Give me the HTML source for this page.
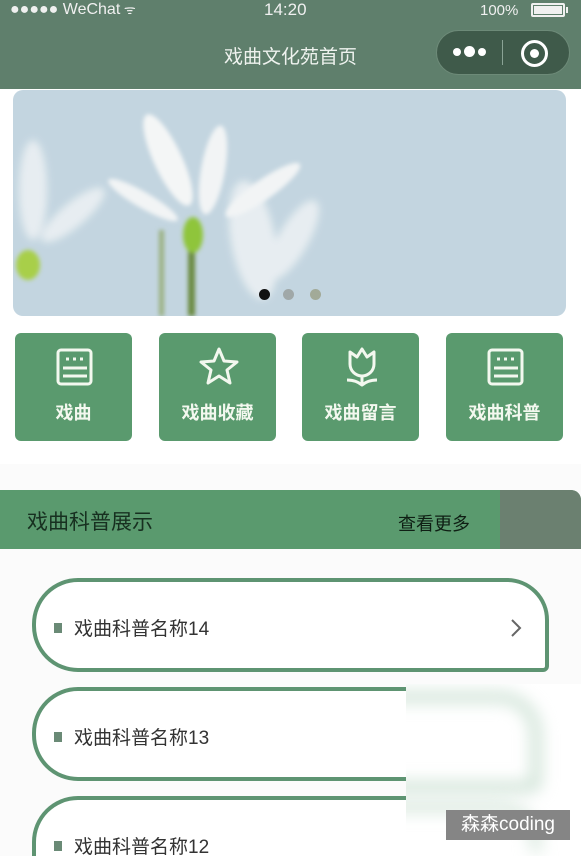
<!DOCTYPE html>
<html style="width:581px;height:856px;overflow:hidden"><head><meta charset="utf-8"><style>
*{margin:0;padding:0;box-sizing:border-box}
body{width:581px;height:856px;overflow:hidden;background:#fbfbfb;font-family:"Liberation Sans","Noto Sans CJK SC",sans-serif;position:relative}
.hdr{position:absolute;left:0;top:0;width:581px;height:89px;background:#5f7f6c;color:#f0f0f0}
.abs{position:absolute}
.tile{position:absolute;top:333px;width:117px;height:108px;background:#5a9a6e;border-radius:6px;color:#f3f8ef;font-size:18px;text-align:center;font-weight:bold}
.tile svg{position:absolute;left:40px;top:14px}
.tile span{position:absolute;left:0;right:0;top:66px}
.item{position:absolute;left:32px;width:517px;height:94px;border:4px solid #5e9472;border-radius:46px 42px 6px 46px;background:#fff;overflow:hidden}
.item .t{position:absolute;left:38px;top:37px;font-size:19px;line-height:22px;color:#333}
.item .sq{position:absolute;left:18px;top:41px;width:8px;height:10px;background:#6a8a76}
</style></head><body>
<div class="hdr">
 <div class="abs" style="left:10px;top:0;font-size:16px;line-height:20px">●●●●● WeChat<span style="font-size:13px"> ᯤ</span></div>
 <div class="abs" style="left:264px;top:0;font-size:17px;line-height:19px">14:20</div>
 <div class="abs" style="left:480px;top:1px;font-size:15px;line-height:19px">100%</div>
 <div class="abs" style="left:531px;top:3px;width:34px;height:14px;border:2px solid #f0f0f0;border-radius:2px;padding:1px"><div style="width:100%;height:100%;background:#f0f0f0"></div></div>
 <div class="abs" style="left:566px;top:7px;width:2px;height:6px;background:#f0f0f0"></div>
 <div class="abs" style="left:0;right:0;top:42px;text-align:center;font-size:19px;color:#eef2ee">戏曲文化苑首页</div>
 <div class="abs" style="left:436px;top:30px;width:134px;height:45px;border-radius:23px;background:#3f5a4a;border:1px solid #6d8a78"></div>
 <div class="abs" style="left:453px;top:46px;font-size:0">
  <span style="display:inline-block;width:8px;height:8px;border-radius:50%;background:#fff;margin-right:3px"></span><span style="display:inline-block;width:11px;height:11px;border-radius:50%;background:#fff;margin-right:3px;vertical-align:-1px"></span><span style="display:inline-block;width:8px;height:8px;border-radius:50%;background:#fff"></span></div>
 <div class="abs" style="left:502px;top:40px;width:1px;height:25px;background:#8aa395"></div>
 <div class="abs" style="left:521px;top:40px;width:27px;height:27px;border-radius:50%;border:3px solid #fff"></div>
 <div class="abs" style="left:530px;top:49px;width:9px;height:9px;border-radius:50%;background:#fff"></div>
</div>
<div class="abs" style="left:0;top:89px;width:581px;height:375px;background:#fff"></div>
<div class="abs" style="left:13px;top:90px;width:553px;height:226px;border-radius:10px;overflow:hidden;background:#c3d5e0">
<svg width="553" height="226" viewBox="0 0 553 226">
<defs><filter id="b"><feGaussianBlur stdDeviation="4"/></filter><filter id="b2"><feGaussianBlur stdDeviation="2"/></filter></defs>
<g filter="url(#b)" opacity=".85">
<ellipse cx="240" cy="150" rx="22" ry="60" fill="#eef2f4" transform="rotate(-10 240 150)"/>
<ellipse cx="280" cy="150" rx="15" ry="45" fill="#eef2f4" transform="rotate(30 280 150)"/>
<ellipse cx="20" cy="100" rx="14" ry="50" fill="#eef2f4"/>
<ellipse cx="60" cy="125" rx="12" ry="40" fill="#eef2f4" transform="rotate(50 60 125)"/>
</g>
<g filter="url(#b2)">
<ellipse cx="155" cy="70" rx="14" ry="50" fill="#f4f6f6" transform="rotate(-25 155 70)"/>
<ellipse cx="200" cy="80" rx="12" ry="45" fill="#f2f4f5" transform="rotate(10 200 80)"/>
<ellipse cx="250" cy="100" rx="10" ry="45" fill="#f2f4f5" transform="rotate(55 250 100)"/>
<ellipse cx="130" cy="110" rx="8" ry="40" fill="#f2f4f5" transform="rotate(-60 130 110)"/>
<rect x="175" y="150" width="7" height="76" fill="#6a8a40"/>
<ellipse cx="180" cy="145" rx="10" ry="18" fill="#8fc53a"/>
<ellipse cx="15" cy="175" rx="12" ry="15" fill="#a8cf4a"/>
<rect x="146" y="140" width="5" height="86" fill="#9ab080"/>
</g>
</svg>
<div class="abs" style="left:246px;top:199px;width:11px;height:11px;border-radius:50%;background:#111"></div>
<div class="abs" style="left:270px;top:199px;width:11px;height:11px;border-radius:50%;background:#a0a8a8"></div>
<div class="abs" style="left:297px;top:199px;width:11px;height:11px;border-radius:50%;background:#a2aa98"></div>
</div>
<div class="tile" style="left:15px"><svg width="40" height="40" viewBox="0 0 40 40" fill="none" stroke="#f3f8ef" stroke-width="3"><rect x="3" y="3" width="33" height="34" rx="3"/><path d="M11 12h3M18 12h3M25 12h3M8 21h24M8 29h24"/></svg><span>戏曲</span></div>
<div class="tile" style="left:159px"><svg width="40" height="40" viewBox="0 0 40 40" fill="none" stroke="#f3f8ef" stroke-width="3" stroke-linejoin="round"><path d="M20 2l5 12 13 1-10 8 3 13-11-7-11 7 3-13-10-8 13-1z"/></svg><span>戏曲收藏</span></div>
<div class="tile" style="left:302px"><svg width="40" height="40" viewBox="0 0 40 40" fill="none" stroke="#f3f8ef" stroke-width="3" stroke-linejoin="round"><path d="M8 5l7 5 5-8 5 8 7-5v12a12 12 0 0 1-24 0z"/><path d="M20 29v9M5 33c7 0 11 2 15 5 4-3 8-5 15-5"/></svg><span>戏曲留言</span></div>
<div class="tile" style="left:446px"><svg width="40" height="40" viewBox="0 0 40 40" fill="none" stroke="#f3f8ef" stroke-width="3"><rect x="3" y="3" width="33" height="34" rx="3"/><path d="M11 12h3M18 12h3M25 12h3M8 21h24M8 29h24"/></svg><span>戏曲科普</span></div>
<div class="abs" style="left:0;top:490px;width:581px;height:59px;background:#5a9a6e;border-radius:0 10px 0 0"></div>
<div class="abs" style="left:500px;top:490px;width:81px;height:59px;background:#6b8070;border-radius:0 10px 0 0"></div>
<div class="abs" style="left:27px;top:506px;font-size:21px;color:#173020">戏曲科普展示</div>
<div class="abs" style="left:398px;top:510px;font-size:18px;color:#0f1f14">查看更多</div>
<div class="item" style="top:578px"><div class="sq"></div><div class="t">戏曲科普名称14</div><svg class="abs" style="left:474px;top:36px" width="12" height="20" viewBox="0 0 12 20"><path d="M2 2l8 8-8 8" fill="none" stroke="#666" stroke-width="2"/></svg></div>
<div class="item" style="top:687px"><div class="sq"></div><div class="t">戏曲科普名称13</div></div>
<div class="item" style="top:796px;height:60px;border-bottom:none;border-radius:46px 42px 0 0"><div class="sq"></div><div class="t">戏曲科普名称12</div></div>
<div class="abs" style="left:406px;top:684px;width:175px;height:172px;background:#fff;overflow:hidden">
 <div class="abs" style="left:-80px;top:8px;width:215px;height:100px;border:10px solid #c9dfd1;border-radius:42px 42px 10px 42px;filter:blur(8px)"></div>
 <div class="abs" style="left:-80px;top:118px;width:215px;height:50px;border:10px solid #d3e5d9;border-bottom:none;border-radius:42px 42px 0 0;filter:blur(8px)"></div>
</div>
<div class="abs" style="left:446px;top:810px;width:124px;height:30px;background:#858585;color:#fff;font-size:19px;text-align:center;line-height:30px">森森coding</div>
</body></html>
